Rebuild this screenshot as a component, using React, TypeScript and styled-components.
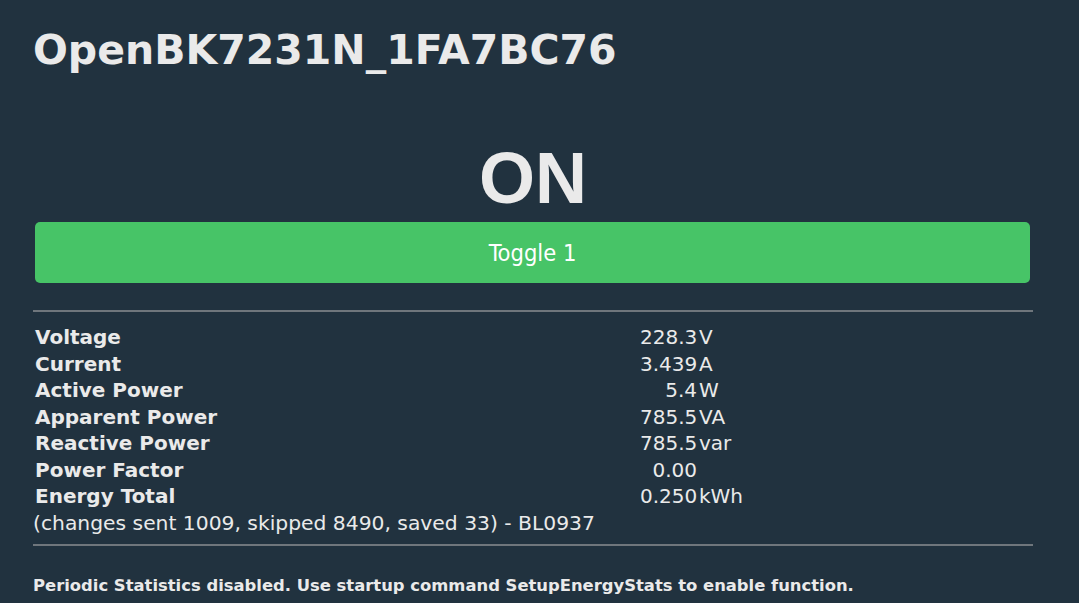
import React from "react";
import styled, { createGlobalStyle } from "styled-components";

const Global = createGlobalStyle`
  html, body {
    margin: 0;
    padding: 0;
    background: #21323f;
    color: #eaeaea;
    font-family: "DejaVu Sans", Verdana, sans-serif;
  }
`;

const Page = styled.div`
  width: 1000px;
  padding: 26px 0 0 33px;
  display: flex;
  flex-direction: column;
`;

const Title = styled.h1`
  margin: 0;
  font-size: 41px;
  line-height: 49px;
  font-weight: bold;
`;

const State = styled.div`
  margin-top: 68px;
  text-align: center;
  font-family: "Liberation Sans", Arial, sans-serif;
  font-weight: bold;
  font-size: 72px;
  line-height: 71px;
`;

const ToggleButton = styled.button`
  margin: 8px 3px 0 2px;
  height: 61px;
  border: none;
  border-radius: 5px;
  background: #47c467;
  color: #ffffff;
  font-family: "DejaVu Sans Condensed", "DejaVu Sans", sans-serif;
  font-size: 23.5px;
  display: flex;
  align-items: center;
  justify-content: center;
  cursor: pointer;
`;

const Rule = styled.hr<{ $top: number }>`
  margin: ${(p) => p.$top}px 0 0 0;
  border: none;
  height: 2px;
  background: #6f767c;
`;

const Stats = styled.div`
  margin-top: 12px;
  display: grid;
  grid-template-columns: 605px 57px 1fr;
  font-size: 20px;
  line-height: 26.5px;
  padding-left: 2px;
`;

const Label = styled.div`
  font-weight: bold;
  font-size: 20px;
`;

const Value = styled.div`
  text-align: right;
`;

const Unit = styled.div`
  padding-left: 2px;
`;

const Note = styled.div`
  font-size: 20.3px;
  line-height: 26.5px;
`;

const Footer = styled.div`
  margin-top: 30px;
  font-weight: bold;
  font-size: 16.4px;
  line-height: 20px;
`;

const rows: [string, string, string][] = [
  ["Voltage", "228.3", "V"],
  ["Current", "3.439", "A"],
  ["Active Power", "5.4", "W"],
  ["Apparent Power", "785.5", "VA"],
  ["Reactive Power", "785.5", "var"],
  ["Power Factor", "0.00", ""],
  ["Energy Total", "0.250", "kWh"],
];

export default function App() {
  return (
    <>
      <Global />
      <Page>
        <Title>OpenBK7231N_1FA7BC76</Title>
        <State>ON</State>
        <ToggleButton>Toggle 1</ToggleButton>
        <Rule $top={27} />
        <Stats>
          {rows.map(([l, v, u]) => (
            <React.Fragment key={l}>
              <Label>{l}</Label>
              <Value>{v}</Value>
              <Unit>{u}</Unit>
            </React.Fragment>
          ))}
        </Stats>
        <Note>(changes sent 1009, skipped 8490, saved 33) - BL0937</Note>
        <Rule $top={8} />
        <Footer>
          Periodic Statistics disabled. Use startup command SetupEnergyStats to enable function.
        </Footer>
      </Page>
    </>
  );
}
